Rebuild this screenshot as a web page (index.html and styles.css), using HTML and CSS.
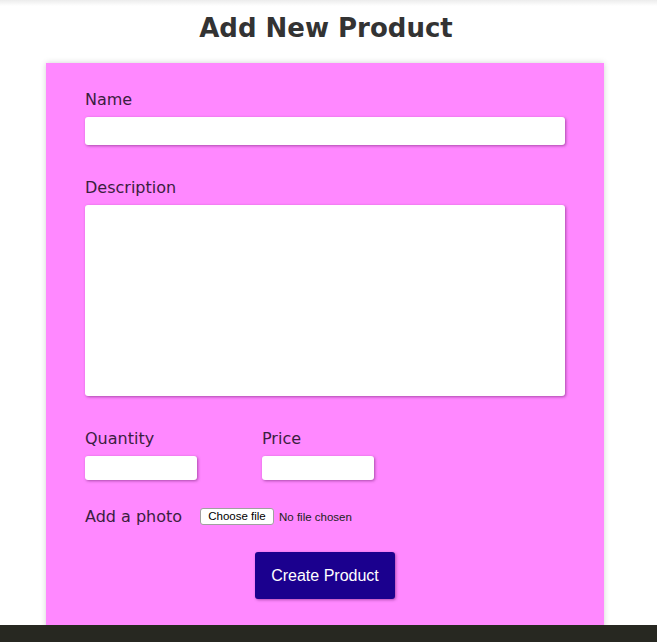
FILE: index.html
```html
<!DOCTYPE html>
<html>
<head>
<meta charset="utf-8">
<link rel="stylesheet" href="styles.css">
</head>
<body>
<div class="topshade"></div>
<h1 class="title">Add New Product</h1>
<form class="card">
  <div class="field">
    <label class="label" for="name">Name</label>
    <input class="input name-input" id="name" type="text">
  </div>
  <div class="field">
    <label class="label" for="desc">Description</label>
    <textarea class="input desc-input" id="desc"></textarea>
  </div>
  <div class="row">
    <div class="col">
      <label class="label" for="qty">Quantity</label>
      <input class="input small-input" id="qty" type="text">
    </div>
    <div class="col">
      <label class="label" for="price">Price</label>
      <input class="input small-input" id="price" type="text">
    </div>
  </div>
  <div class="photo-row">
    <span class="photo-label">Add a photo</span>
    <label class="file">
      <input class="file-hidden" type="file">
      <span class="file-btn">Choose file</span>
      <span class="file-text">No file chosen</span>
    </label>
  </div>
  <div class="actions">
    <button class="submit" type="button">Create Product</button>
  </div>
</form>
<div class="footer"></div>
</body>
</html>
```
FILE: styles.css
```css
html, body {
  margin: 0;
  padding: 0;
  background: #ffffff;
  overflow: hidden;
  height: 642px;
}
body {
  font-family: "DejaVu Sans", Verdana, sans-serif;
  position: relative;
}
.topshade {
  position: absolute;
  left: 0;
  top: 0;
  width: 100%;
  height: 6px;
  background: linear-gradient(#ececec, rgba(255,255,255,0));
}
.title {
  margin: 0;
  padding-top: 12px;
  height: 63px;
  box-sizing: border-box;
  text-align: center;
  font-size: 26px;
  font-weight: bold;
  color: #333333;
  line-height: 32px;
  padding-right: 5px;
}
.card {
  width: 558px;
  margin-left: 46px;
  box-sizing: border-box;
  background: #ff88ff;
  padding: 27px 39px 60px;
  box-shadow: 0 0 6px rgba(0,0,0,0.18);
}
.field {
  margin-bottom: 33px;
}
.label {
  display: block;
  font-size: 16px;
  line-height: 19px;
  color: #3b1e40;
  margin-bottom: 8px;
}
.input {
  display: block;
  border: none;
  border-radius: 3px;
  background: #ffffff;
  box-shadow: 1px 1px 3px rgba(100,20,100,0.55);
  box-sizing: border-box;
  outline: none;
  margin: 0;
  padding: 0;
}
.name-input {
  width: 480px;
  height: 28px;
}
.desc-input {
  width: 480px;
  height: 191px;
  resize: none;
}
.row {
  display: flex;
}
.col {
  width: 177px;
}
.small-input {
  width: 112px;
  height: 24px;
}
.photo-row {
  display: flex;
  align-items: center;
  margin-top: 27px;
}
.photo-label {
  font-size: 16px;
  color: #3b1e40;
  width: 115px;
}
.file {
  display: flex;
  align-items: center;
  font-family: "Liberation Sans", Arial, sans-serif;
  font-size: 11.5px;
  color: #222;
}
.file-hidden {
  display: none;
}
.file-btn {
  display: block;
  box-sizing: border-box;
  width: 74px;
  height: 17px;
  line-height: 15px;
  text-align: center;
  background: #fff;
  border: 1px solid #a0a0a0;
  border-radius: 3px;
  color: #000;
  margin-right: 5px;
}
.file-text {
  color: #222;
}
.actions {
  display: flex;
  justify-content: center;
  margin-top: 26px;
}
.submit {
  width: 140px;
  height: 47px;
  background: #1b008e;
  color: #ffffff;
  border: none;
  border-radius: 3px;
  font-family: "Liberation Sans", Arial, sans-serif;
  font-size: 16px;
  box-shadow: 1px 1px 3px rgba(80,0,80,0.45);
  padding: 0;
}
.footer {
  position: absolute;
  left: 0;
  top: 625px;
  width: 100%;
  height: 17px;
  background: #272821;
}
```
